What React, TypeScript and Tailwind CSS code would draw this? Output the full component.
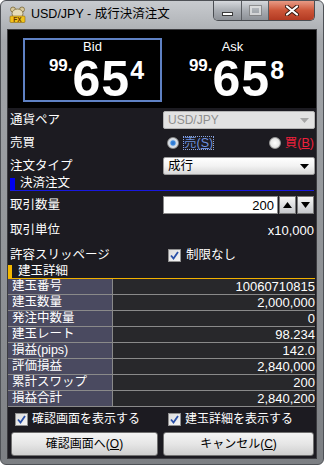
import React from "react";

// 成行決済注文ウィンドウ (USD/JPY)
const narrow = "font-['Liberation_Sans_Narrow','Liberation_Sans',sans-serif]";

const rows = [
  { label: "建玉番号", value: "10060710815" },
  { label: "建玉数量", value: "2,000,000" },
  { label: "発注中数量", value: "0" },
  { label: "建玉レート", value: "98.234" },
  { label: "損益(pips)", value: "142.0" },
  { label: "評価損益", value: "2,840,000" },
  { label: "累計スワップ", value: "200" },
  { label: "損益合計", value: "2,840,200" },
];

function AppIcon() {
  return (
    <svg width="17" height="17" viewBox="0 0 17 17">
      <circle cx="4" cy="3.5" r="2.5" fill="#d8c89a" stroke="#7a6a3a" strokeWidth="0.8" />
      <circle cx="13" cy="3.5" r="2.5" fill="#d8c89a" stroke="#7a6a3a" strokeWidth="0.8" />
      <ellipse cx="8.5" cy="7.5" rx="5.5" ry="4.5" fill="#e6dcb8" stroke="#7a6a3a" strokeWidth="0.8" />
      <rect x="1" y="10" width="15" height="6.5" rx="1" fill="#f2c21a" stroke="#8a6a10" strokeWidth="0.6" />
      <text x="8.5" y="15.6" fontSize="6.5" fontWeight="bold" textAnchor="middle" fill="#6a3a00" fontFamily="Liberation Sans">FX</text>
    </svg>
  );
}

function TitleBar() {
  return (
    <div className="h-[28px] flex items-start">
      <div className="ml-[8px] mt-[5px]">
        <AppIcon />
      </div>
      <div className="ml-[5px] mt-[5px] text-[12.5px] leading-[16px] text-black font-['Liberation_Sans','Noto_Sans_CJK_JP',sans-serif]">
        USD/JPY - 成行決済注文
      </div>
      <div className="ml-auto mr-[8px] flex h-[20px] rounded-b-[5px] border border-t-0 border-[#4a4d52] overflow-hidden">
        <div className="w-[28px] h-full flex items-center justify-center bg-gradient-to-b from-[#d6d9dd] via-[#a9adb3] to-[#8d9197] border-r border-[#5a5d62]">
          <div className="w-[11px] h-[4px] bg-white border border-[#3a3a3a] mt-[6px]" />
        </div>
        <div className="w-[27px] h-full flex items-center justify-center bg-gradient-to-b from-[#d6d9dd] via-[#a9adb3] to-[#8d9197] border-r border-[#5a5d62]">
          <div className="w-[11px] h-[9px] border-2 border-[#e8e8e8] outline outline-1 outline-[#7a7a7a] opacity-70" />
        </div>
        <div className="w-[45px] h-full flex items-center justify-center bg-gradient-to-b from-[#e79a85] via-[#cc5538] to-[#b33a22]">
          <svg width="14" height="11" viewBox="0 0 14 11">
            <path d="M2 1.5 L12 9.5 M12 1.5 L2 9.5" stroke="#3a1a10" strokeWidth="4" strokeLinecap="round" />
            <path d="M2 1.5 L12 9.5 M12 1.5 L2 9.5" stroke="#ffffff" strokeWidth="2.2" strokeLinecap="round" />
          </svg>
        </div>
      </div>
    </div>
  );
}

function Price({ label, small, boxed }: { label: string; small: string; boxed?: boolean }) {
  return (
    <div
      className={`w-[139px] h-[64px] flex flex-col items-center border-2 ${
        boxed ? "border-[#5f81c4]" : "border-transparent"
      }`}
    >
      <div className="text-white text-[13px] leading-[13px] font-['Liberation_Sans',sans-serif]">
        {label}
      </div>
      <div className="flex items-start text-white font-bold font-['Liberation_Sans',sans-serif] mt-[4px] pl-[8px]">
        <span className="text-[17px] leading-none">99.</span>
        <span className="text-[50px] leading-[40px] mt-[2px] tracking-[1px]">65</span>
        <span className="text-[25px] leading-none mt-[1px]">{small}</span>
      </div>
    </div>
  );
}

function Arrow({ color }: { color: string }) {
  return (
    <svg width="9" height="5" viewBox="0 0 9 5">
      <path d="M0 0 H9 L4.5 5 Z" fill={color} />
    </svg>
  );
}

function Check() {
  return (
    <div className="w-[13px] h-[13px] border border-[#8f8f8f] bg-gradient-to-br from-[#dcdcdc] to-[#f6f6f6] flex items-center justify-center">
      <svg width="9" height="9" viewBox="0 0 9 9">
        <path d="M1 4.5 L3.5 7.5 L8 1" stroke="#2a50a8" strokeWidth="1.8" fill="none" />
      </svg>
    </div>
  );
}

function Row({ label, children, h }: { label: string; children?: React.ReactNode; h: string }) {
  return (
    <div className={`flex items-center ${h}`}>
      <div className="flex-1 pl-[2px] text-[12.5px] leading-none text-white">{label}</div>
      <div className="w-[152px] mr-[1px] flex items-center">{children}</div>
    </div>
  );
}

export default function App() {
  return (
    <div className="w-[324px] h-[465px] bg-white">
      <div className="w-[324px] h-[465px] rounded-[6px] border border-[#4e5156] bg-[linear-gradient(180deg,#c8cbcf_0%,#a4a7ab_40px,#8f9296_60%,#7c7f83_100%)] flex flex-col font-['Liberation_Sans','Noto_Sans_CJK_JP',sans-serif] select-none">
        <TitleBar />
        <div className="mx-[6px] h-[430px] border border-[#3c3c40] bg-[#1c1b21] flex flex-col">
          {/* レート表示 */}
          <div className="h-[78px] bg-black flex pl-[15px] pt-[8px] gap-[1px]">
            <Price label="Bid" small="4" boxed />
            <Price label="Ask" small="8" />
          </div>

          <Row label="通貨ペア" h="h-[18px] mt-[3px]">
            <div className="w-full h-[18px] border border-[#b4b4b4] rounded-[2px] bg-[#e2e2e2] flex items-center pl-[4px] pr-[5px]">
              <span className="flex-1 text-[12px] leading-none text-[#8e8e8e]">USD/JPY</span>
              <Arrow color="#a6a6a6" />
            </div>
          </Row>

          <Row label="売買" h="h-[28px]">
            <div className="w-full flex items-center pl-[4px]">
              <div className="w-[12px] h-[12px] rounded-full border border-[#8a8a8a] bg-[radial-gradient(circle,#2a6ec8_0%,#3a8ae0_30%,#cfd8e2_45%,#f4f4f4_100%)]" />
              <span className="ml-[5px] text-[12.5px] leading-none text-[#6e90dc] outline outline-1 outline-dotted outline-[#8aa4e0]">
                売(<span className="underline">S</span>)
              </span>
              <div className="ml-auto w-[12px] h-[12px] rounded-full border border-[#9a9a9a] bg-[radial-gradient(circle,#ffffff_0%,#e6e6e6_60%,#c8c8c8_100%)]" />
              <span className="ml-[4px] mr-[1px] text-[12.5px] leading-none text-[#f0203c]">
                買(<span className="underline">B</span>)
              </span>
            </div>
          </Row>

          <Row label="注文タイプ" h="h-[18px]">
            <div className="w-full h-[18px] border border-[#9a9a9a] rounded-[2px] bg-gradient-to-b from-[#ffffff] via-[#f2f2f2] to-[#d8d8d8] flex items-center pl-[4px] pr-[5px]">
              <span className="flex-1 text-[12.5px] leading-none text-black">成行</span>
              <Arrow color="#000000" />
            </div>
          </Row>

          {/* 決済注文 */}
          <div className="mx-[2px] mt-[1px] h-[15px] flex items-end border-b border-[#1818e0]">
            <div className="w-[5px] h-[12px] bg-[#0000f0]" />
            <span className="ml-[5px] text-[12.5px] leading-[13px] text-white">決済注文</span>
          </div>

          <Row label="取引数量" h="h-[18px] mt-[5px]">
            <div className="w-[115px] h-[18px] bg-white border border-[#8a8a8a] flex items-center justify-end pr-[3px]">
              <span className={`${narrow} text-[13px] leading-none text-black`}>200</span>
            </div>
            <div className="w-[17px] h-[18px] ml-px border border-[#7a7a7a] bg-gradient-to-b from-[#f6f6f6] to-[#c6c8cc] flex items-center justify-center">
              <svg width="9" height="6" viewBox="0 0 9 6"><path d="M0 6 H9 L4.5 0 Z" fill="#000" /></svg>
            </div>
            <div className="w-[17px] h-[18px] ml-px border border-[#7a7a7a] bg-gradient-to-b from-[#f6f6f6] to-[#c6c8cc] flex items-center justify-center">
              <svg width="9" height="6" viewBox="0 0 9 6"><path d="M0 0 H9 L4.5 6 Z" fill="#000" /></svg>
            </div>
          </Row>

          <Row label="取引単位" h="h-[32px]">
            <div className={`w-full text-right pr-[1px] ${narrow} text-[13px] leading-none text-white`}>x10,000</div>
          </Row>

          <Row label="許容スリッページ" h="h-[18px]">
            <div className="flex items-center pl-[5px]">
              <Check />
              <span className="ml-[5px] text-[12.5px] leading-none text-white">制限なし</span>
            </div>
          </Row>

          {/* 建玉詳細 */}
          <div className="h-[15px] flex items-end border-b border-[#f0b000] mr-[1px]">
            <div className="w-[4px] h-[13px] bg-[#f4b800]" />
            <span className="ml-[6px] text-[12.5px] leading-[13px] text-white">建玉詳細</span>
          </div>

          <div className="mr-[1px] flex flex-col">
            {rows.map((r) => (
              <div key={r.label} className="h-[16px] flex border-b border-[#8a8a8a]">
                <div className="w-[105px] bg-[#4a4a60] border-r border-[#8a8a8a] pl-[4px] flex items-center text-[12.5px] leading-none text-white">
                  {r.label}
                </div>
                <div className={`flex-1 bg-[#28282b] flex items-center justify-end ${narrow} text-[13px] leading-none text-white`}>
                  {r.value}
                </div>
              </div>
            ))}
          </div>

          <div className="h-[24px] flex items-center">
            <div className="w-[160px] flex items-center pl-[7px]">
              <Check />
              <span className="ml-[4px] text-[12px] leading-none text-white">確認画面を表示する</span>
            </div>
            <div className="flex items-center">
              <Check />
              <span className="ml-[4px] text-[12px] leading-none text-white">建玉詳細を表示する</span>
            </div>
          </div>

          <div className="mt-[1px] flex pl-[3px] gap-[5px]">
            <button className="w-[147px] h-[24px] rounded-[3px] border border-[#707070] bg-gradient-to-b from-[#f4f4f4] via-[#e6e6e6] to-[#cfcfcf] text-[12px] leading-none text-black">
              確認画面へ(<span className="underline">O</span>)
            </button>
            <button className="w-[151px] h-[24px] rounded-[3px] border border-[#707070] bg-gradient-to-b from-[#f4f4f4] via-[#e6e6e6] to-[#cfcfcf] text-[12px] leading-none text-black">
              キャンセル(<span className="underline">C</span>)
            </button>
          </div>
        </div>
      </div>
    </div>
  );
}
